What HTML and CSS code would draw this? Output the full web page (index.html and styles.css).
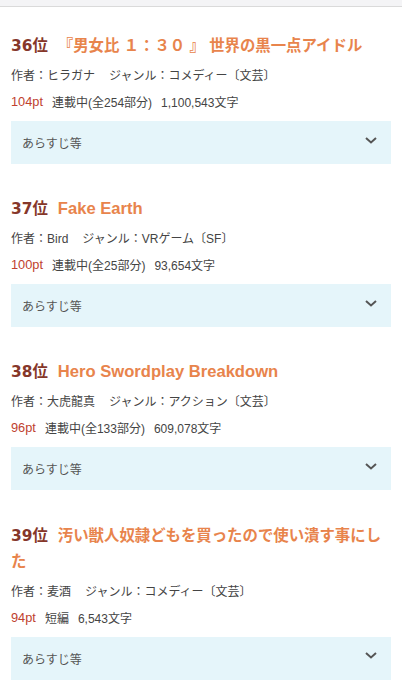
FILE: index.html
```html
<!DOCTYPE html>
<html lang="ja">
<head>
<meta charset="utf-8">
<link rel="stylesheet" href="styles.css">
</head>
<body>
<div class="topbar"></div>
<div class="list">
  <div class="item">
    <div class="title"><span class="rank">36位</span><span class="name">『男女比 １：３０ 』 世界の黒一点アイドル</span></div>
    <div class="meta"><span class="author">作者：ヒラガナ</span><span>ジャンル：コメディー〔文芸〕</span></div>
    <div class="meta"><span class="pt">104pt</span><span class="status">連載中(全254部分)</span><span>1,100,543文字</span></div>
    <div class="summary"><span>あらすじ等</span><svg class="chev" width="12" height="7" viewBox="0 0 12 7"><path d="M1 1 L6 5.5 L11 1" fill="none" stroke="#555" stroke-width="2"/></svg></div>
  </div>
  <div class="item">
    <div class="title"><span class="rank">37位</span><span class="name latin">Fake Earth</span></div>
    <div class="meta"><span class="author">作者：Bird</span><span>ジャンル：VRゲーム〔SF〕</span></div>
    <div class="meta"><span class="pt">100pt</span><span class="status">連載中(全25部分)</span><span>93,654文字</span></div>
    <div class="summary"><span>あらすじ等</span><svg class="chev" width="12" height="7" viewBox="0 0 12 7"><path d="M1 1 L6 5.5 L11 1" fill="none" stroke="#555" stroke-width="2"/></svg></div>
  </div>
  <div class="item">
    <div class="title"><span class="rank">38位</span><span class="name latin">Hero Swordplay Breakdown</span></div>
    <div class="meta"><span class="author">作者：大虎龍真</span><span>ジャンル：アクション〔文芸〕</span></div>
    <div class="meta"><span class="pt">96pt</span><span class="status">連載中(全133部分)</span><span>609,078文字</span></div>
    <div class="summary"><span>あらすじ等</span><svg class="chev" width="12" height="7" viewBox="0 0 12 7"><path d="M1 1 L6 5.5 L11 1" fill="none" stroke="#555" stroke-width="2"/></svg></div>
  </div>
  <div class="item">
    <div class="title"><span class="rank">39位</span><span class="name">汚い獣人奴隷どもを買ったので使い潰す事にした</span></div>
    <div class="meta"><span class="author">作者：麦酒</span><span>ジャンル：コメディー〔文芸〕</span></div>
    <div class="meta"><span class="pt">94pt</span><span class="status">短編</span><span>6,543文字</span></div>
    <div class="summary"><span>あらすじ等</span><svg class="chev" width="12" height="7" viewBox="0 0 12 7"><path d="M1 1 L6 5.5 L11 1" fill="none" stroke="#555" stroke-width="2"/></svg></div>
  </div>
</div>
</body>
</html>
```
FILE: styles.css
```css
html, body {
  margin: 0;
  padding: 0;
  background: #fff;
}
body {
  font-family: "Liberation Sans", "Noto Sans CJK JP", sans-serif;
  color: #444;
}
.topbar {
  height: 6px;
  background: #f4f4f6;
  border-bottom: 1px solid #dadada;
}
.list {
  padding: 26px 11px 0;
}
.item + .item {
  margin-top: 32.2px;
}
.title {
  font-family: "Liberation Sans", "Noto Sans CJK JP", sans-serif;
  font-size: 15.4px;
  line-height: 26px;
  font-weight: bold;
  margin-bottom: 2px;
}
.rank {
  font-family: "DejaVu Sans", "Noto Sans CJK JP", sans-serif;
  color: #86372a;
  margin-right: 10px;
}
.name {
  color: #e8844c;
}
.name.latin {
  font-size: 16.6px;
}
.meta {
  display: flex;
  align-items: center;
  height: 27px;
  font-size: 12px;
  color: #444;
}
.author {
  margin-right: 14px;
}
.pt {
  font-size: 12.8px;
  color: #c0412f;
  margin-right: 9px;
}
.status {
  margin-right: 9px;
}
.summary {
  margin-top: 6px;
  height: 43px;
  background: #e5f5fa;
  display: flex;
  align-items: center;
  justify-content: space-between;
  padding: 0 14px 0 11px;
  font-size: 12px;
  color: #555;
}
.chev {
  margin-top: -5px;
}
```
